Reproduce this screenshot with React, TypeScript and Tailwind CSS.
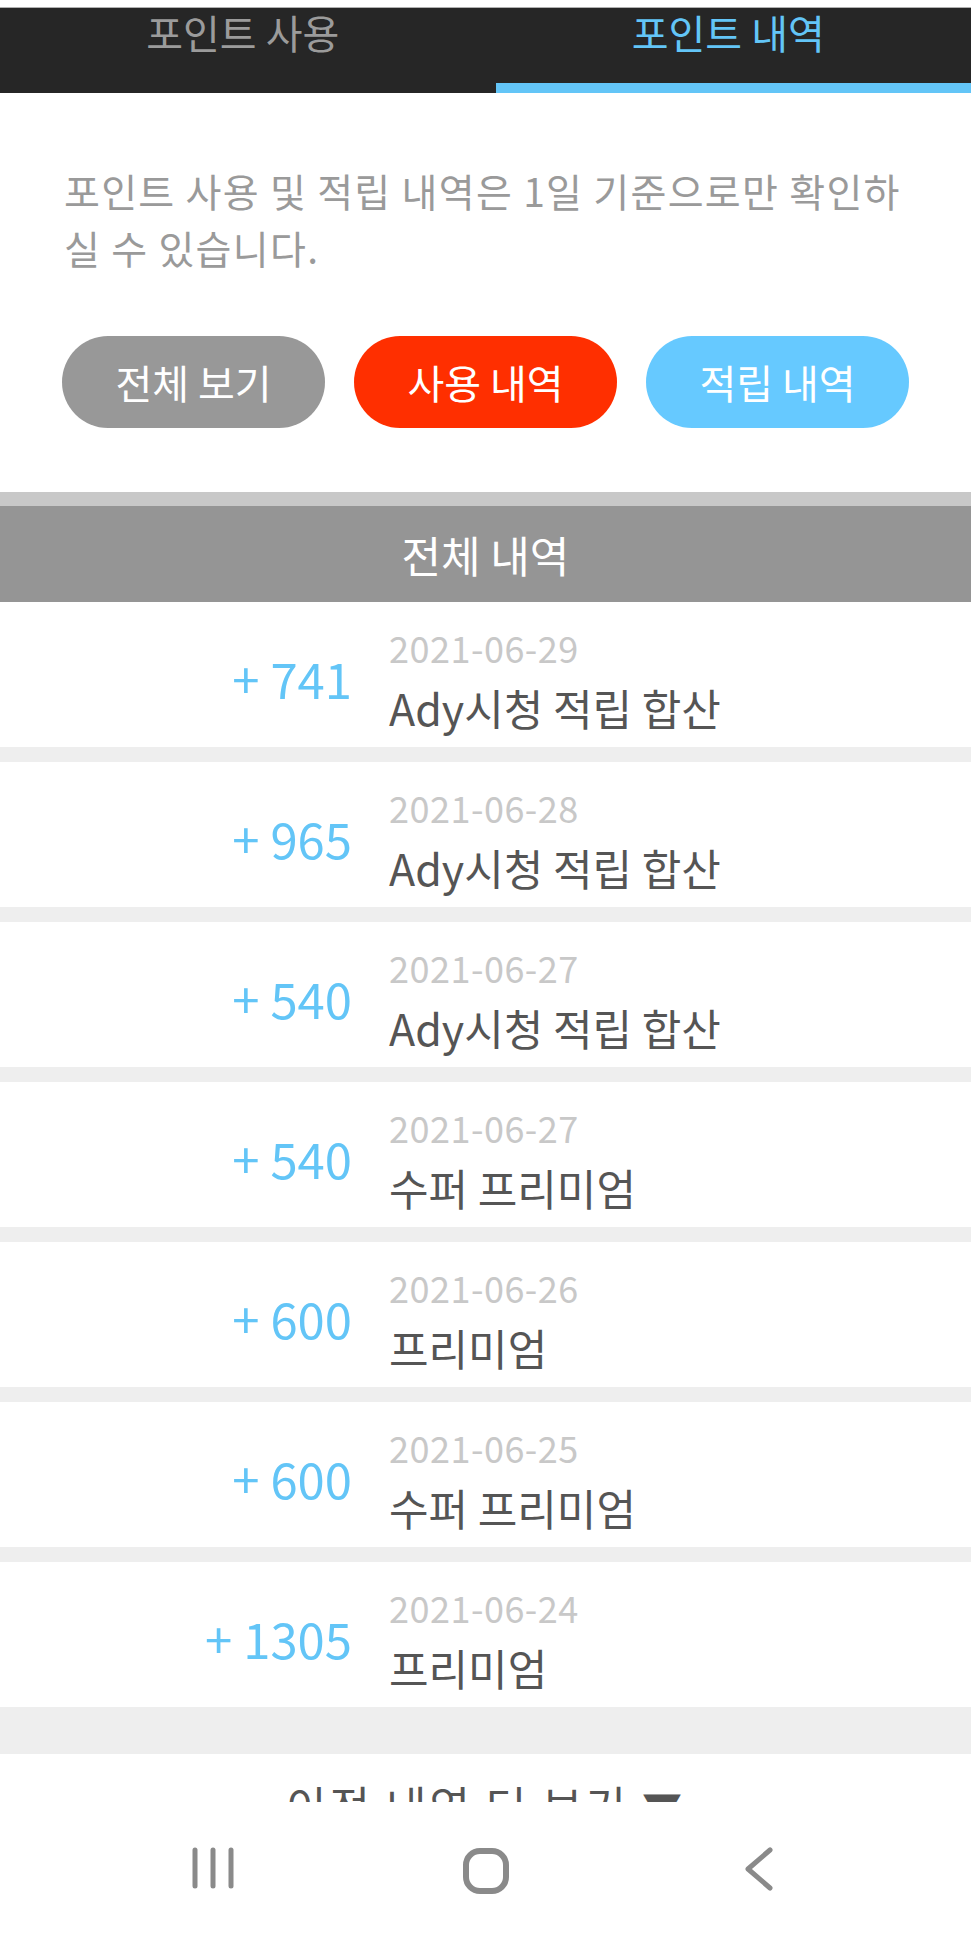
const history = [
  { amount: 741, date: "2021-06-29", title: "Ady시청 적립 합산" },
  { amount: 965, date: "2021-06-28", title: "Ady시청 적립 합산" },
  { amount: 540, date: "2021-06-27", title: "Ady시청 적립 합산" },
  { amount: 540, date: "2021-06-27", title: "수퍼 프리미엄" },
  { amount: 600, date: "2021-06-26", title: "프리미엄" },
  { amount: 600, date: "2021-06-25", title: "수퍼 프리미엄" },
  { amount: 1305, date: "2021-06-24", title: "프리미엄" },
];

const HistoryRow = ({ amount, date, title }: { amount: number; date: string; title: string }) => (
  <div className="flex h-[145px] bg-white">
    <div className="flex w-[352px] items-center justify-end pt-[6px] text-[49px] leading-none text-[#63c5f7]">
      +&nbsp;{amount}
    </div>
    <div className="ml-[37px] flex flex-col pt-[22px]">
      <span className="text-[36px] leading-[46px] tracking-[0.5px] text-[#c8c8c8]">{date}</span>
      <span className="mt-[14px] text-[43px] leading-[46px] text-[#555555]">{title}</span>
    </div>
  </div>
);

const NavBar = () => (
  <nav className="flex h-[137px] shrink-0 items-center justify-center bg-white">
    <div className="grid w-[819px] grid-cols-3">
      <div className="flex justify-center">
        <svg width="42" height="42" viewBox="0 0 42 42" fill="none" stroke="#8a8a8a" strokeWidth="5" strokeLinecap="round">
          <line x1="3" y1="3" x2="3" y2="39" />
          <line x1="21" y1="3" x2="21" y2="39" />
          <line x1="39" y1="3" x2="39" y2="39" />
        </svg>
      </div>
      <div className="flex justify-center">
        <svg width="48" height="48" viewBox="0 0 48 48" fill="none" stroke="#8a8a8a" strokeWidth="6">
          <rect x="4" y="4" width="40" height="40" rx="14" />
        </svg>
      </div>
      <div className="flex justify-center">
        <svg width="30" height="44" viewBox="0 0 30 44" fill="none" stroke="#8a8a8a" strokeWidth="5" strokeLinecap="round" strokeLinejoin="round">
          <polyline points="26,3 4,22 26,41" />
        </svg>
      </div>
    </div>
  </nav>
);

export default function App() {
  return (
    <div className="flex h-[1939px] w-full flex-col overflow-hidden bg-white font-['Noto_Sans_CJK_KR','Noto_Sans',sans-serif]">
      <div className="flex-1 overflow-hidden">
        <div className="h-[8px] border-b border-[#b0b0b0] bg-white" />

        {/* tabs */}
        <div className="flex h-[85px] bg-[#262626]">
          <div className="flex-1 text-center text-[40px] leading-[48px] text-[#9b9b9b]">포인트 사용</div>
          <div className="flex flex-1 flex-col justify-between text-center">
            <span className="text-[40px] leading-[48px] text-[#63c5f7]">포인트 내역</span>
            <div className="ml-[10px] h-[10px] bg-[#63c5f7]" />
          </div>
        </div>

        <section className="px-[64px] pb-[64px] pt-[69px]">
          <p className="text-[39px] leading-[57px] tracking-[1.3px] text-[#9a9a9a]">
            포인트 사용 및 적립 내역은 1일 기준으로만 확인하실 수 있습니다.
          </p>
          <div className="-mx-[2px] mt-[60px] grid grid-cols-3 gap-[29px]">
            <button className="h-[92px] rounded-full bg-[#989898] text-[40px] text-white">전체 보기</button>
            <button className="h-[92px] rounded-full bg-[#ff2f00] text-[40px] text-white">사용 내역</button>
            <button className="h-[92px] rounded-full bg-[#66c9ff] text-[40px] text-white">적립 내역</button>
          </div>
        </section>

        <div className="h-[14px] bg-[#c8c8c8]" />
        <div className="flex h-[96px] items-center justify-center bg-[#959595] text-[43px] text-white">전체 내역</div>

        {history.map((item, i) => (
          <div key={i}>
            <HistoryRow {...item} />
            <div className={i === history.length - 1 ? "h-[47px] bg-[#eeeeee]" : "h-[15px] bg-[#eeeeee]"} />
          </div>
        ))}

        <div className="pt-[26px] text-center text-[44px] leading-[50px] tracking-[3px] text-[#555555]">
          이전 내역 더 보기 <span className="text-[40px]">▼</span>
        </div>
      </div>
      <NavBar />
    </div>
  );
}
